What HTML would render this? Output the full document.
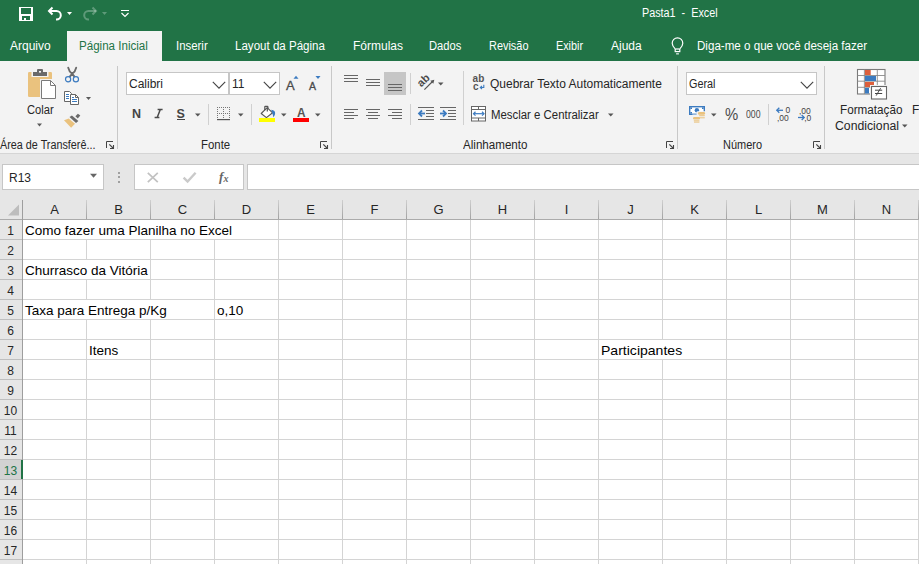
<!DOCTYPE html>
<html><head><meta charset="utf-8"><style>
html,body{margin:0;padding:0;width:919px;height:564px;overflow:hidden;background:#fff;}
body{position:relative;font-family:"Liberation Sans",sans-serif;}
body>div{position:absolute;}
.t{white-space:pre;line-height:1;}
.ch{font-size:13px;color:#262626;text-align:center;}
.rh{left:0;width:21px;font-size:12px;color:#262626;text-align:center;}
</style></head><body>
<div style="left:0px;top:0px;width:919px;height:61px;background:#217346;"></div>
<div style="left:67px;top:31px;width:95px;height:30px;background:#F3F3F3;"></div>
<div style="left:0px;top:61px;width:919px;height:92px;background:#F3F3F3;"></div>
<div style="left:0px;top:153px;width:919px;height:1px;background:#D5D5D5;"></div>
<div style="left:0px;top:154px;width:919px;height:46px;background:#E6E6E6;"></div>
<div class="t" style="left:642px;top:7px;font-size:12px;color:#FFFFFF;transform:scaleX(0.9000);transform-origin:0 0;">Pasta1&nbsp;&nbsp;-&nbsp;&nbsp;Excel</div>
<div class="t" style="left:10px;top:40px;font-size:12px;color:#FFFFFF;transform:scaleX(1.0000);transform-origin:0 0;">Arquivo</div>
<div class="t" style="left:79px;top:40px;font-size:12px;color:#217346;transform:scaleX(0.9650);transform-origin:0 0;">Página Inicial</div>
<div class="t" style="left:176px;top:40px;font-size:12px;color:#FFFFFF;transform:scaleX(0.9500);transform-origin:0 0;">Inserir</div>
<div class="t" style="left:235px;top:40px;font-size:12px;color:#FFFFFF;transform:scaleX(0.9630);transform-origin:0 0;">Layout da Página</div>
<div class="t" style="left:353px;top:40px;font-size:12px;color:#FFFFFF;transform:scaleX(1.0000);transform-origin:0 0;">Fórmulas</div>
<div class="t" style="left:429px;top:40px;font-size:12px;color:#FFFFFF;transform:scaleX(0.9300);transform-origin:0 0;">Dados</div>
<div class="t" style="left:489px;top:40px;font-size:12px;color:#FFFFFF;transform:scaleX(0.9100);transform-origin:0 0;">Revisão</div>
<div class="t" style="left:556px;top:40px;font-size:12px;color:#FFFFFF;transform:scaleX(0.9000);transform-origin:0 0;">Exibir</div>
<div class="t" style="left:611px;top:40px;font-size:12px;color:#FFFFFF;transform:scaleX(1.0000);transform-origin:0 0;">Ajuda</div>
<div class="t" style="left:697px;top:40px;font-size:12px;color:#FFFFFF;transform:scaleX(0.9660);transform-origin:0 0;">Diga-me o que você deseja fazer</div>
<div style="left:126px;top:72px;width:103px;height:23px;background:#FFFFFF;box-sizing:border-box;border:1px solid #C6C6C6;"></div>
<div style="left:229px;top:72px;width:51px;height:23px;background:#FFFFFF;box-sizing:border-box;border:1px solid #C6C6C6;"></div>
<div style="left:686px;top:72px;width:131px;height:23px;background:#FFFFFF;box-sizing:border-box;border:1px solid #C6C6C6;"></div>
<svg style="position:absolute;left:664px;top:34px;" width="30" height="24" viewBox="0 0 30 24"><path d="M11 14.6 Q8.2 11.6 8.2 9.2 A5.3 5.3 0 1 1 18.8 9.2 Q18.8 11.6 16 14.6" fill="none" stroke="#FFF" stroke-width="1.2"/><rect x="11.2" y="15" width="4.6" height="2.6" fill="none" stroke="#FFF" stroke-width="1.2"/><rect x="12.1" y="19.3" width="2.8" height="1.1" fill="#FFF"/></svg>
<svg style="position:absolute;left:19px;top:7px;" width="14" height="14" viewBox="0 0 14 14"><rect x="0" y="0" width="14" height="14" fill="#FFFFFF"/><rect x="2" y="1" width="10" height="6" fill="#217346"/><rect x="3" y="9" width="8" height="4" fill="#217346"/><rect x="5" y="11" width="2" height="2" fill="#FFFFFF"/></svg>
<svg style="position:absolute;left:40px;top:0px;" width="40" height="28" viewBox="0 0 40 28"><path d="M9 11 H16.5 A4.3 4.3 0 0 1 16.5 19.6 H16" fill="none" stroke="#FFFFFF" stroke-width="2"/><path d="M12.5 7.5 L9 11 L12.5 14.5" fill="none" stroke="#FFFFFF" stroke-width="2"/><path d="M27 12 H32 L29.5 15 Z" fill="#FFFFFF"/></svg>
<svg style="position:absolute;left:75px;top:0px;" width="40" height="28" viewBox="0 0 40 28"><path d="M21 11 H13.5 A4.3 4.3 0 0 0 13.5 19.6 H14" fill="none" stroke="rgba(255,255,255,0.28)" stroke-width="2"/><path d="M17.5 7.5 L21 11 L17.5 14.5" fill="none" stroke="rgba(255,255,255,0.28)" stroke-width="2"/><path d="M27 12 H32 L29.5 15 Z" fill="rgba(255,255,255,0.28)"/></svg>
<svg style="position:absolute;left:118px;top:6px;" width="14" height="14" viewBox="0 0 14 14"><path d="M3 4.5 H11" stroke="#FFFFFF" stroke-width="1"/><path d="M3.5 7 L7 10.5 L10.5 7" fill="none" stroke="#FFFFFF" stroke-width="1.2"/></svg>
<svg style="position:absolute;left:27px;top:68px;" width="31" height="32" viewBox="0 0 31 32"><rect x="1" y="4" width="24" height="25" rx="1.2" fill="#EAC27E"/><rect x="4.5" y="3" width="17" height="6" fill="#F3F3F3"/><rect x="6" y="4" width="14" height="4" fill="#6A6A6A"/><rect x="10" y="1" width="6" height="4" rx="1" fill="#6A6A6A"/><rect x="12" y="3" width="2" height="1.6" fill="#F3F3F3"/><rect x="13" y="11" width="18" height="21" fill="#F3F3F3"/><path d="M14.5 12.5 H23.5 L28.5 17.5 V30.5 H14.5 Z" fill="#FFFFFF" stroke="#7A7A7A" stroke-width="1"/><path d="M23.5 12.5 V17.5 H28.5" fill="none" stroke="#7A7A7A" stroke-width="1"/></svg>
<svg style="position:absolute;left:36px;top:123px;" width="8" height="5" viewBox="0 0 8 5"><path d="M1 0.5 H6 L3.5 3.5 Z" fill="#5A5A5A"/></svg>
<svg style="position:absolute;left:62px;top:64px;" width="18" height="20" viewBox="0 0 18 20"><path d="M6.2 3.6 Q7 7.5 10.2 9.8 L12.6 12.8 M14.2 3.6 Q13.4 7.5 10.2 9.8 L7.6 12.8" fill="none" stroke="#6A6A6A" stroke-width="1.9" stroke-linecap="round"/><circle cx="6.1" cy="15.3" r="2.6" fill="#F3F3F3" stroke="#3C7BC0" stroke-width="1.2"/><circle cx="13.9" cy="15.3" r="2.6" fill="#F3F3F3" stroke="#3C7BC0" stroke-width="1.2"/></svg>
<svg style="position:absolute;left:63px;top:90px;" width="18" height="16" viewBox="0 0 18 16"><path d="M1.5 1.5 H6.5 L8.5 3.5 V11.5 H1.5 Z" fill="#FFFFFF" stroke="#666" stroke-width="1"/><path d="M3 4.5 H6 M3 6.5 H6 M3 8.5 H6" stroke="#3C7BC0" stroke-width="1"/><path d="M7.5 4.5 H12.5 L15.5 7.5 V14.5 H7.5 Z" fill="#FFFFFF" stroke="#666" stroke-width="1"/><path d="M12.5 4.5 V7.5 H15.5" fill="none" stroke="#666" stroke-width="1"/><path d="M9 7.5 H11 M9 9.5 H14 M9 11.5 H14" stroke="#3C7BC0" stroke-width="1"/></svg>
<svg style="position:absolute;left:85px;top:96px;" width="8" height="5" viewBox="0 0 8 5"><path d="M1 1 H6 L3.5 4 Z" fill="#5A5A5A"/></svg>
<svg style="position:absolute;left:60px;top:108px;" width="26" height="24" viewBox="0 0 26 24"><path d="M4 12.3 L8.7 10.6 L15 15.8 L11.1 19.8 Z" fill="#EAC27E"/><path d="M9.5 9.1 L11.9 7.6 L18.4 12.9 L16 15 Z" fill="#6A6A6A"/><path d="M15.4 8.2 L17.9 5.7 L20.3 7.5 L17.8 10.4 Z" fill="#6A6A6A"/></svg>
<svg style="position:absolute;left:105px;top:140px;" width="10" height="10" viewBox="0 0 10 10"><path d="M1.5 8 V1.5 H8" fill="none" stroke="#444" stroke-width="1"/><path d="M4.3 4.3 L8 8" stroke="#444" stroke-width="1.1"/><path d="M8.5 5 V8.5 H5" fill="none" stroke="#444" stroke-width="1.1"/></svg>
<svg style="position:absolute;left:319px;top:140px;" width="10" height="10" viewBox="0 0 10 10"><path d="M1.5 8 V1.5 H8" fill="none" stroke="#444" stroke-width="1"/><path d="M4.3 4.3 L8 8" stroke="#444" stroke-width="1.1"/><path d="M8.5 5 V8.5 H5" fill="none" stroke="#444" stroke-width="1.1"/></svg>
<svg style="position:absolute;left:665px;top:140px;" width="10" height="10" viewBox="0 0 10 10"><path d="M1.5 8 V1.5 H8" fill="none" stroke="#444" stroke-width="1"/><path d="M4.3 4.3 L8 8" stroke="#444" stroke-width="1.1"/><path d="M8.5 5 V8.5 H5" fill="none" stroke="#444" stroke-width="1.1"/></svg>
<svg style="position:absolute;left:812px;top:140px;" width="10" height="10" viewBox="0 0 10 10"><path d="M1.5 8 V1.5 H8" fill="none" stroke="#444" stroke-width="1"/><path d="M4.3 4.3 L8 8" stroke="#444" stroke-width="1.1"/><path d="M8.5 5 V8.5 H5" fill="none" stroke="#444" stroke-width="1.1"/></svg>
<svg style="position:absolute;left:211.5px;top:80.5px;" width="14" height="8" viewBox="0 0 14 8"><path d="M0.8 0.8 L7.0 7.2 L13.2 0.8" fill="none" stroke="#444444" stroke-width="1.1"/></svg>
<svg style="position:absolute;left:262.5px;top:80.5px;" width="14" height="8" viewBox="0 0 14 8"><path d="M0.8 0.8 L7.0 7.2 L13.2 0.8" fill="none" stroke="#444444" stroke-width="1.1"/></svg>
<div class="t" style="left:286px;top:79px;font-size:13px;color:#4A4A4A;-webkit-text-stroke:0.3px #4A4A4A;">A</div>
<svg style="position:absolute;left:293px;top:75px;" width="7" height="5" viewBox="0 0 7 5"><path d="M0.5 3.8 L3 0.8 L5.5 3.8 Z" fill="#3C7BC0"/></svg>
<div class="t" style="left:309px;top:81px;font-size:10.5px;color:#4A4A4A;-webkit-text-stroke:0.3px #4A4A4A;">A</div>
<svg style="position:absolute;left:315px;top:75px;" width="7" height="5" viewBox="0 0 7 5"><path d="M0.5 1 L3 4 L5.5 1 Z" fill="#3C7BC0"/></svg>
<div class="t" style="left:132px;top:108px;font-size:12.5px;font-weight:bold;color:#444;">N</div>
<svg style="position:absolute;left:153px;top:108px;" width="11" height="11" viewBox="0 0 11 11"><path d="M4.6 1.6 H9.6 M1.6 9.6 H6.4 M7.3 1.6 L4.2 9.6" fill="none" stroke="#4A4A4A" stroke-width="1.5"/></svg>
<div class="t" style="left:176.5px;top:108px;font-size:12.5px;font-weight:bold;color:#444;">S</div>
<div style="left:177px;top:119px;width:8px;height:1px;background:#444;"></div>
<svg style="position:absolute;left:194.5px;top:113px;" width="6" height="4" viewBox="0 0 6 4"><path d="M0 0.5 H5.5 L2.75 3.5 Z" fill="#555"/></svg>
<div style="left:208px;top:104px;width:1px;height:21px;background:#D0D0D0;"></div>
<svg style="position:absolute;left:217px;top:107px;" width="14" height="14" viewBox="0 0 14 14"><rect x="0" y="0" width="1" height="1" fill="#777"/><rect x="6" y="0" width="1" height="1" fill="#777"/><rect x="12" y="0" width="1" height="1" fill="#777"/><rect x="0" y="2" width="1" height="1" fill="#777"/><rect x="6" y="2" width="1" height="1" fill="#777"/><rect x="12" y="2" width="1" height="1" fill="#777"/><rect x="0" y="4" width="1" height="1" fill="#777"/><rect x="6" y="4" width="1" height="1" fill="#777"/><rect x="12" y="4" width="1" height="1" fill="#777"/><rect x="0" y="6" width="1" height="1" fill="#777"/><rect x="6" y="6" width="1" height="1" fill="#777"/><rect x="12" y="6" width="1" height="1" fill="#777"/><rect x="0" y="8" width="1" height="1" fill="#777"/><rect x="6" y="8" width="1" height="1" fill="#777"/><rect x="12" y="8" width="1" height="1" fill="#777"/><rect x="0" y="10" width="1" height="1" fill="#777"/><rect x="6" y="10" width="1" height="1" fill="#777"/><rect x="12" y="10" width="1" height="1" fill="#777"/><rect x="2" y="0" width="1" height="1" fill="#777"/><rect x="4" y="0" width="1" height="1" fill="#777"/><rect x="6" y="0" width="1" height="1" fill="#777"/><rect x="8" y="0" width="1" height="1" fill="#777"/><rect x="10" y="0" width="1" height="1" fill="#777"/><rect x="2" y="6" width="1" height="1" fill="#777"/><rect x="4" y="6" width="1" height="1" fill="#777"/><rect x="6" y="6" width="1" height="1" fill="#777"/><rect x="8" y="6" width="1" height="1" fill="#777"/><rect x="10" y="6" width="1" height="1" fill="#777"/><rect x="0" y="12" width="13" height="1.2" fill="#555"/></svg>
<svg style="position:absolute;left:237.5px;top:113px;" width="6" height="4" viewBox="0 0 6 4"><path d="M0 0.5 H5.5 L2.75 3.5 Z" fill="#555"/></svg>
<div style="left:251px;top:104px;width:1px;height:21px;background:#D0D0D0;"></div>
<svg style="position:absolute;left:258px;top:104px;" width="20" height="20" viewBox="0 0 20 20"><path d="M3.2 9.5 L9.2 3.6 L14.6 8.8 L8.4 13.6 Z" fill="#FFF" stroke="#555" stroke-width="1.1" stroke-linejoin="round"/><path d="M6.8 6.2 V2.8 Q6.8 2.3 7.3 2.3 H9.3 Q9.9 2.3 9.9 2.9 V4.4 M9.3 4 V7.6" fill="none" stroke="#555" stroke-width="1.2"/><path d="M13.2 5.8 Q17.6 6.4 17.1 10 Q16.7 12 15.2 13.3 Q15.1 11 14.3 9.2 Z" fill="#3C7BC0"/><rect x="1" y="14" width="16" height="4" fill="#FFFF00"/></svg>
<svg style="position:absolute;left:280.5px;top:113px;" width="6" height="4" viewBox="0 0 6 4"><path d="M0 0.5 H5.5 L2.75 3.5 Z" fill="#555"/></svg>
<div class="t" style="left:297px;top:106px;font-size:13.5px;font-weight:bold;color:#555;transform:scaleX(0.88);transform-origin:0 0;">A</div>
<div style="left:293px;top:118px;width:16px;height:4px;background:#FF0000;"></div>
<svg style="position:absolute;left:314.5px;top:113px;" width="6" height="4" viewBox="0 0 6 4"><path d="M0 0.5 H5.5 L2.75 3.5 Z" fill="#555"/></svg>
<div style="left:344px;top:75px;width:14px;height:1px;background:#666666;"></div>
<div style="left:344px;top:78px;width:14px;height:1px;background:#666666;"></div>
<div style="left:344px;top:81px;width:14px;height:1px;background:#666666;"></div>
<div style="left:366px;top:79px;width:14px;height:1px;background:#666666;"></div>
<div style="left:366px;top:82px;width:14px;height:1px;background:#666666;"></div>
<div style="left:366px;top:85px;width:14px;height:1px;background:#666666;"></div>
<div style="left:384px;top:72px;width:22px;height:23px;background:#C6C6C6;"></div>
<div style="left:388px;top:84px;width:14px;height:1px;background:#666666;"></div>
<div style="left:388px;top:87px;width:14px;height:1px;background:#666666;"></div>
<div style="left:388px;top:90px;width:14px;height:1px;background:#666666;"></div>
<div style="left:410px;top:73px;width:1px;height:21px;background:#D0D0D0;"></div>
<svg style="position:absolute;left:416px;top:73px;" width="22" height="20" viewBox="0 0 22 20"><text x="0" y="0" transform="translate(5.3,14.6) rotate(-45)" font-family="Liberation Sans" font-size="11" font-weight="bold" fill="#4A4A4A">ab</text><path d="M8.4 16.6 L16.5 8.5" stroke="#555" stroke-width="1.2"/><path d="M18.3 6.7 L14.3 7.7 L17.3 10.7 Z" fill="#555"/></svg>
<svg style="position:absolute;left:437.5px;top:82px;" width="6" height="4" viewBox="0 0 6 4"><path d="M0 0.5 H5.5 L2.75 3.5 Z" fill="#555"/></svg>
<div style="left:344px;top:109px;width:14px;height:1px;background:#666666;"></div>
<div style="left:366px;top:109px;width:14px;height:1px;background:#666666;"></div>
<div style="left:388px;top:109px;width:14px;height:1px;background:#666666;"></div>
<div style="left:344px;top:112px;width:10px;height:1px;background:#666666;"></div>
<div style="left:368px;top:112px;width:10px;height:1px;background:#666666;"></div>
<div style="left:392px;top:112px;width:10px;height:1px;background:#666666;"></div>
<div style="left:344px;top:115px;width:14px;height:1px;background:#666666;"></div>
<div style="left:366px;top:115px;width:14px;height:1px;background:#666666;"></div>
<div style="left:388px;top:115px;width:14px;height:1px;background:#666666;"></div>
<div style="left:344px;top:118px;width:10px;height:1px;background:#666666;"></div>
<div style="left:368px;top:118px;width:10px;height:1px;background:#666666;"></div>
<div style="left:392px;top:118px;width:10px;height:1px;background:#666666;"></div>
<div style="left:410px;top:104px;width:1px;height:21px;background:#D0D0D0;"></div>
<div style="left:418px;top:107px;width:16px;height:1px;background:#666666;"></div>
<div style="left:418px;top:119px;width:16px;height:1px;background:#666666;"></div>
<div style="left:426px;top:110px;width:8px;height:1px;background:#666666;"></div>
<div style="left:426px;top:113px;width:8px;height:1px;background:#666666;"></div>
<div style="left:426px;top:116px;width:8px;height:1px;background:#666666;"></div>
<div style="left:440px;top:107px;width:16px;height:1px;background:#666666;"></div>
<div style="left:440px;top:119px;width:16px;height:1px;background:#666666;"></div>
<div style="left:448px;top:110px;width:8px;height:1px;background:#666666;"></div>
<div style="left:448px;top:113px;width:8px;height:1px;background:#666666;"></div>
<div style="left:448px;top:116px;width:8px;height:1px;background:#666666;"></div>
<svg style="position:absolute;left:417px;top:105px;" width="18" height="16" viewBox="0 0 18 16"><path d="M2.2 8.5 H8" stroke="#3C7BC0" stroke-width="1.8"/><path d="M5 5.5 L2 8.5 L5 11.5" fill="none" stroke="#3C7BC0" stroke-width="1.8"/></svg>
<svg style="position:absolute;left:439px;top:105px;" width="18" height="16" viewBox="0 0 18 16"><path d="M1 8.5 H6.8" stroke="#3C7BC0" stroke-width="1.8"/><path d="M4 5.5 L7 8.5 L4 11.5" fill="none" stroke="#3C7BC0" stroke-width="1.8"/></svg>
<div style="left:463px;top:71px;width:1px;height:54px;background:#D0D0D0;"></div>
<svg style="position:absolute;left:470px;top:74px;" width="18" height="18" viewBox="0 0 18 18"><text x="2.6" y="8.4" font-family="Liberation Sans" font-size="10" font-weight="bold" fill="#555">ab</text><text x="3" y="15.9" font-family="Liberation Sans" font-size="10" font-weight="bold" fill="#555">c</text><path d="M13.8 10.8 V13.5 H10.5" fill="none" stroke="#3C7BC0" stroke-width="1.1"/><path d="M12 12 L10.3 13.5 L12 15" fill="none" stroke="#3C7BC0" stroke-width="1.1"/></svg>
<svg style="position:absolute;left:470px;top:105px;" width="18" height="18" viewBox="0 0 18 18"><rect x="1.5" y="1.5" width="14" height="14.5" fill="#FFF" stroke="#666" stroke-width="1"/><path d="M1.5 4.5 H15.5 M1.5 13 H15.5 M8.5 1.5 V4.5 M8.5 13 V16" stroke="#666" stroke-width="1"/><path d="M3.8 8.7 H13.8" stroke="#3C7BC0" stroke-width="1.2"/><path d="M5.5 6.8 L3.5 8.7 L5.5 10.6 M12 6.8 L14 8.7 L12 10.6" fill="none" stroke="#3C7BC0" stroke-width="1.2"/></svg>
<svg style="position:absolute;left:608px;top:113px;" width="6" height="4" viewBox="0 0 6 4"><path d="M0 0.5 H5.5 L2.75 3.5 Z" fill="#555"/></svg>
<svg style="position:absolute;left:799.5px;top:80.5px;" width="14" height="8" viewBox="0 0 14 8"><path d="M0.8 0.8 L7.0 7.2 L13.2 0.8" fill="none" stroke="#444444" stroke-width="1.1"/></svg>
<svg style="position:absolute;left:687px;top:104px;" width="20" height="20" viewBox="0 0 20 20"><rect x="2" y="2" width="16" height="9" fill="#3C7BC0"/><rect x="3.4" y="3.4" width="13.2" height="6.2" fill="#FFF"/><rect x="3.4" y="3.4" width="1.6" height="1.6" fill="#3C7BC0"/><rect x="15" y="3.4" width="1.6" height="1.6" fill="#3C7BC0"/><rect x="3.4" y="8" width="1.6" height="1.6" fill="#3C7BC0"/><rect x="15" y="8" width="1.6" height="1.6" fill="#3C7BC0"/><circle cx="9.9" cy="6.2" r="2.2" fill="#3C7BC0"/><rect x="9.6" y="7.2" width="9.5" height="4.5" rx="1" fill="#F3F3F3"/><rect x="5" y="10.5" width="9" height="8" rx="1" fill="#F3F3F3"/><rect x="10.9" y="8" width="7.2" height="2.8" rx="1.4" fill="#EAC27E"/><rect x="12.2" y="11.2" width="5.6" height="1" fill="#EAC27E"/><rect x="12.2" y="13.3" width="5.6" height="1" fill="#EAC27E"/><rect x="6" y="13" width="7" height="2.6" rx="1.3" fill="#EAC27E"/><rect x="6.8" y="16.3" width="5.6" height="1" fill="#EAC27E"/><rect x="7" y="17.6" width="5.4" height="1" fill="#EAC27E"/></svg>
<svg style="position:absolute;left:710.5px;top:113px;" width="6" height="4" viewBox="0 0 6 4"><path d="M0 0.5 H5.5 L2.75 3.5 Z" fill="#555"/></svg>
<div class="t" style="left:724.5px;top:107px;font-size:16px;color:#4A4A4A;transform:scaleX(0.93);transform-origin:0 0;">%</div>
<div class="t" style="left:745.5px;top:108.5px;font-size:10.5px;color:#4A4A4A;transform:scaleX(0.83);transform-origin:0 0;">000</div>
<div style="left:768px;top:104px;width:1px;height:21px;background:#D0D0D0;"></div>
<svg style="position:absolute;left:775px;top:105px;" width="18" height="18" viewBox="0 0 18 18"><path d="M1.8 5.3 H8" stroke="#3C7BC0" stroke-width="1.3"/><path d="M4.3 2.8 L1.8 5.3 L4.3 7.8" fill="none" stroke="#3C7BC0" stroke-width="1.3"/><text x="10.5" y="7.5" font-family="Liberation Sans" font-size="8.5" fill="#444">0</text><text x="2" y="15.5" font-family="Liberation Sans" font-size="8.5" fill="#444">,00</text></svg>
<svg style="position:absolute;left:797px;top:105px;" width="18" height="18" viewBox="0 0 18 18"><text x="2" y="8.8" font-family="Liberation Sans" font-size="8.5" fill="#444">,00</text><text x="7.2" y="15.5" font-family="Liberation Sans" font-size="8.5" fill="#444">,0</text><path d="M1 12.5 H7.2" stroke="#3C7BC0" stroke-width="1.3"/><path d="M4.7 10 L7.2 12.5 L4.7 15" fill="none" stroke="#3C7BC0" stroke-width="1.3"/></svg>
<svg style="position:absolute;left:855px;top:67px;" width="34" height="34" viewBox="0 0 34 34"><rect x="2.5" y="2.5" width="27.5" height="24.5" fill="#FFF" stroke="#7A7A7A" stroke-width="1.1"/><path d="M2.5 8.5 H30 M2.5 14.2 H30 M2.5 20.3 H30 M9.4 2.5 V27 M22.3 2.5 V27" stroke="#8A8A8A" stroke-width="0.9"/><rect x="10" y="3" width="5.7" height="5" fill="#DD5F3C"/><rect x="10" y="9" width="11" height="5" fill="#3C7BC0"/><rect x="10" y="15" width="9" height="5" fill="#DD5F3C"/><rect x="10" y="21" width="4" height="5.5" fill="#3C7BC0"/><rect x="15" y="18" width="18.5" height="15" fill="#F3F3F3"/><rect x="16.5" y="19.5" width="15" height="12.5" fill="#FFF" stroke="#666" stroke-width="1.1"/><path d="M20 23.2 H27.2 M20 26.5 H27.2" stroke="#444" stroke-width="1"/><path d="M25.6 21.2 L21.2 28.6" stroke="#444" stroke-width="1"/></svg>
<svg style="position:absolute;left:902px;top:124px;" width="6" height="4" viewBox="0 0 6 4"><path d="M0 0.5 H5.5 L2.75 3.5 Z" fill="#555"/></svg>
<div class="t" style="left:27px;top:104px;font-size:12px;color:#262626;transform:scaleX(0.9300);transform-origin:0 0;">Colar</div>
<div class="t" style="left:0px;top:139px;font-size:12px;color:#262626;transform:scaleX(0.9000);transform-origin:0 0;">Área de Transferê...</div>
<div class="t" style="left:201px;top:139px;font-size:12px;color:#262626;transform:scaleX(0.9500);transform-origin:0 0;">Fonte</div>
<div class="t" style="left:463px;top:139px;font-size:12px;color:#262626;transform:scaleX(0.9660);transform-origin:0 0;">Alinhamento</div>
<div class="t" style="left:723px;top:139px;font-size:12px;color:#262626;transform:scaleX(0.9140);transform-origin:0 0;">Número</div>
<div class="t" style="left:840px;top:104px;font-size:12px;color:#262626;transform:scaleX(0.9750);transform-origin:0 0;">Formatação</div>
<div class="t" style="left:835px;top:120px;font-size:12px;color:#262626;transform:scaleX(1.0200);transform-origin:0 0;">Condicional</div>
<div class="t" style="left:912px;top:104px;font-size:12px;color:#262626;">F</div>
<div class="t" style="left:490px;top:78px;font-size:12px;color:#262626;">Quebrar Texto Automaticamente</div>
<div class="t" style="left:491px;top:109px;font-size:12px;color:#262626;transform:scaleX(0.9500);transform-origin:0 0;">Mesclar e Centralizar</div>
<div class="t" style="left:129px;top:78px;font-size:12px;color:#262626;">Calibri</div>
<div class="t" style="left:232px;top:78px;font-size:12px;color:#262626;">11</div>
<div class="t" style="left:689px;top:78px;font-size:12px;color:#262626;transform:scaleX(0.9000);transform-origin:0 0;">Geral</div>
<div style="left:117px;top:66px;width:1px;height:83px;background:#C8C8C8;"></div>
<div style="left:331px;top:66px;width:1px;height:83px;background:#C8C8C8;"></div>
<div style="left:677px;top:66px;width:1px;height:83px;background:#C8C8C8;"></div>
<div style="left:824px;top:66px;width:1px;height:83px;background:#C8C8C8;"></div>
<div style="left:2px;top:164px;width:102px;height:26px;background:#FFFFFF;box-sizing:border-box;border:1px solid #C6C6C6;"></div>
<div class="t" style="left:9px;top:172px;font-size:12px;color:#262626;">R13</div>
<div style="left:134px;top:164px;width:110px;height:26px;background:#FFFFFF;box-sizing:border-box;border:1px solid #C6C6C6;"></div>
<div style="left:247px;top:164px;width:680px;height:26px;background:#FFFFFF;box-sizing:border-box;border:1px solid #C6C6C6;"></div>
<svg style="position:absolute;left:89px;top:173px;" width="10" height="6" viewBox="0 0 10 6"><path d="M1 0.8 H8 L4.5 4.8 Z" fill="#666"/></svg>
<div style="left:118px;top:172px;width:2px;height:2px;background:#A0A0A0;"></div>
<div style="left:118px;top:176.3px;width:2px;height:2px;background:#A0A0A0;"></div>
<div style="left:118px;top:180.6px;width:2px;height:2px;background:#A0A0A0;"></div>
<svg style="position:absolute;left:145px;top:170px;" width="16" height="15" viewBox="0 0 16 15"><path d="M2.8 2.8 L12.8 12.2 M12.8 2.8 L2.8 12.2" stroke="#C2C2C2" stroke-width="1.7"/></svg>
<svg style="position:absolute;left:181px;top:170px;" width="17" height="15" viewBox="0 0 17 15"><path d="M2.6 7.6 L6.6 11.6 L14.6 2.8" fill="none" stroke="#CACACA" stroke-width="2.4"/></svg>
<div class="t" style="left:219px;top:170px;font-size:13px;font-style:italic;font-weight:bold;font-family:'Liberation Serif';color:#666;">f</div>
<div class="t" style="left:223.5px;top:173.5px;font-size:10px;font-style:italic;font-weight:bold;font-family:'Liberation Serif';color:#666;">x</div>
<div style="left:0px;top:200px;width:919px;height:20px;background:#E6E6E6;"></div>
<div style="left:0px;top:220px;width:22px;height:344px;background:#E6E6E6;"></div>
<div style="left:23px;top:220px;width:896px;height:344px;background:#FFFFFF;"></div>
<div style="left:0px;top:219px;width:919px;height:1px;background:#ABABAB;"></div>
<svg style="position:absolute;left:0px;top:200px;" width="22" height="19" viewBox="0 0 22 19"><path d="M8 15.5 L19 4.5 V15.5 Z" fill="#BDBDBD"/></svg>
<div style="left:22px;top:200px;width:1px;height:364px;background:#9E9E9E;"></div>
<div style="left:86px;top:200px;width:1px;height:19px;background:linear-gradient(#CFCFCF,#A2A2A2);"></div>
<div style="left:86px;top:220px;width:1px;height:344px;background:#D4D4D4;"></div>
<div class="t ch" style="left:23px;top:203px;width:63px;">A</div>
<div style="left:150px;top:200px;width:1px;height:19px;background:linear-gradient(#CFCFCF,#A2A2A2);"></div>
<div style="left:150px;top:220px;width:1px;height:344px;background:#D4D4D4;"></div>
<div class="t ch" style="left:87px;top:203px;width:63px;">B</div>
<div style="left:214px;top:200px;width:1px;height:19px;background:linear-gradient(#CFCFCF,#A2A2A2);"></div>
<div style="left:214px;top:220px;width:1px;height:344px;background:#D4D4D4;"></div>
<div class="t ch" style="left:151px;top:203px;width:63px;">C</div>
<div style="left:278px;top:200px;width:1px;height:19px;background:linear-gradient(#CFCFCF,#A2A2A2);"></div>
<div style="left:278px;top:220px;width:1px;height:344px;background:#D4D4D4;"></div>
<div class="t ch" style="left:215px;top:203px;width:63px;">D</div>
<div style="left:342px;top:200px;width:1px;height:19px;background:linear-gradient(#CFCFCF,#A2A2A2);"></div>
<div style="left:342px;top:220px;width:1px;height:344px;background:#D4D4D4;"></div>
<div class="t ch" style="left:279px;top:203px;width:63px;">E</div>
<div style="left:406px;top:200px;width:1px;height:19px;background:linear-gradient(#CFCFCF,#A2A2A2);"></div>
<div style="left:406px;top:220px;width:1px;height:344px;background:#D4D4D4;"></div>
<div class="t ch" style="left:343px;top:203px;width:63px;">F</div>
<div style="left:470px;top:200px;width:1px;height:19px;background:linear-gradient(#CFCFCF,#A2A2A2);"></div>
<div style="left:470px;top:220px;width:1px;height:344px;background:#D4D4D4;"></div>
<div class="t ch" style="left:407px;top:203px;width:63px;">G</div>
<div style="left:534px;top:200px;width:1px;height:19px;background:linear-gradient(#CFCFCF,#A2A2A2);"></div>
<div style="left:534px;top:220px;width:1px;height:344px;background:#D4D4D4;"></div>
<div class="t ch" style="left:471px;top:203px;width:63px;">H</div>
<div style="left:598px;top:200px;width:1px;height:19px;background:linear-gradient(#CFCFCF,#A2A2A2);"></div>
<div style="left:598px;top:220px;width:1px;height:344px;background:#D4D4D4;"></div>
<div class="t ch" style="left:535px;top:203px;width:63px;">I</div>
<div style="left:662px;top:200px;width:1px;height:19px;background:linear-gradient(#CFCFCF,#A2A2A2);"></div>
<div style="left:662px;top:220px;width:1px;height:344px;background:#D4D4D4;"></div>
<div class="t ch" style="left:599px;top:203px;width:63px;">J</div>
<div style="left:726px;top:200px;width:1px;height:19px;background:linear-gradient(#CFCFCF,#A2A2A2);"></div>
<div style="left:726px;top:220px;width:1px;height:344px;background:#D4D4D4;"></div>
<div class="t ch" style="left:663px;top:203px;width:63px;">K</div>
<div style="left:790px;top:200px;width:1px;height:19px;background:linear-gradient(#CFCFCF,#A2A2A2);"></div>
<div style="left:790px;top:220px;width:1px;height:344px;background:#D4D4D4;"></div>
<div class="t ch" style="left:727px;top:203px;width:63px;">L</div>
<div style="left:854px;top:200px;width:1px;height:19px;background:linear-gradient(#CFCFCF,#A2A2A2);"></div>
<div style="left:854px;top:220px;width:1px;height:344px;background:#D4D4D4;"></div>
<div class="t ch" style="left:791px;top:203px;width:63px;">M</div>
<div style="left:918px;top:200px;width:1px;height:19px;background:linear-gradient(#CFCFCF,#A2A2A2);"></div>
<div style="left:918px;top:220px;width:1px;height:344px;background:#D4D4D4;"></div>
<div class="t ch" style="left:855px;top:203px;width:63px;">N</div>
<div style="left:23px;top:239px;width:896px;height:1px;background:#D4D4D4;"></div>
<div style="left:0px;top:239px;width:22px;height:1px;background:#BFBFBF;"></div>
<div class="t rh" style="top:225px;">1</div>
<div style="left:23px;top:259px;width:896px;height:1px;background:#D4D4D4;"></div>
<div style="left:0px;top:259px;width:22px;height:1px;background:#BFBFBF;"></div>
<div class="t rh" style="top:245px;">2</div>
<div style="left:23px;top:279px;width:896px;height:1px;background:#D4D4D4;"></div>
<div style="left:0px;top:279px;width:22px;height:1px;background:#BFBFBF;"></div>
<div class="t rh" style="top:265px;">3</div>
<div style="left:23px;top:299px;width:896px;height:1px;background:#D4D4D4;"></div>
<div style="left:0px;top:299px;width:22px;height:1px;background:#BFBFBF;"></div>
<div class="t rh" style="top:285px;">4</div>
<div style="left:23px;top:319px;width:896px;height:1px;background:#D4D4D4;"></div>
<div style="left:0px;top:319px;width:22px;height:1px;background:#BFBFBF;"></div>
<div class="t rh" style="top:305px;">5</div>
<div style="left:23px;top:339px;width:896px;height:1px;background:#D4D4D4;"></div>
<div style="left:0px;top:339px;width:22px;height:1px;background:#BFBFBF;"></div>
<div class="t rh" style="top:325px;">6</div>
<div style="left:23px;top:359px;width:896px;height:1px;background:#D4D4D4;"></div>
<div style="left:0px;top:359px;width:22px;height:1px;background:#BFBFBF;"></div>
<div class="t rh" style="top:345px;">7</div>
<div style="left:23px;top:379px;width:896px;height:1px;background:#D4D4D4;"></div>
<div style="left:0px;top:379px;width:22px;height:1px;background:#BFBFBF;"></div>
<div class="t rh" style="top:365px;">8</div>
<div style="left:23px;top:399px;width:896px;height:1px;background:#D4D4D4;"></div>
<div style="left:0px;top:399px;width:22px;height:1px;background:#BFBFBF;"></div>
<div class="t rh" style="top:385px;">9</div>
<div style="left:23px;top:419px;width:896px;height:1px;background:#D4D4D4;"></div>
<div style="left:0px;top:419px;width:22px;height:1px;background:#BFBFBF;"></div>
<div class="t rh" style="top:405px;">10</div>
<div style="left:23px;top:439px;width:896px;height:1px;background:#D4D4D4;"></div>
<div style="left:0px;top:439px;width:22px;height:1px;background:#BFBFBF;"></div>
<div class="t rh" style="top:425px;">11</div>
<div style="left:23px;top:459px;width:896px;height:1px;background:#D4D4D4;"></div>
<div style="left:0px;top:459px;width:22px;height:1px;background:#BFBFBF;"></div>
<div class="t rh" style="top:445px;">12</div>
<div style="left:23px;top:479px;width:896px;height:1px;background:#D4D4D4;"></div>
<div style="left:0px;top:479px;width:22px;height:1px;background:#BFBFBF;"></div>
<div style="left:0px;top:460px;width:22px;height:19px;background:#D2D2D2;"></div>
<div style="left:21px;top:460px;width:2px;height:19px;background:#217346;"></div>
<div class="t rh" style="top:465px;color:#217346;">13</div>
<div style="left:23px;top:499px;width:896px;height:1px;background:#D4D4D4;"></div>
<div style="left:0px;top:499px;width:22px;height:1px;background:#BFBFBF;"></div>
<div class="t rh" style="top:485px;">14</div>
<div style="left:23px;top:519px;width:896px;height:1px;background:#D4D4D4;"></div>
<div style="left:0px;top:519px;width:22px;height:1px;background:#BFBFBF;"></div>
<div class="t rh" style="top:505px;">15</div>
<div style="left:23px;top:539px;width:896px;height:1px;background:#D4D4D4;"></div>
<div style="left:0px;top:539px;width:22px;height:1px;background:#BFBFBF;"></div>
<div class="t rh" style="top:525px;">16</div>
<div style="left:23px;top:559px;width:896px;height:1px;background:#D4D4D4;"></div>
<div style="left:0px;top:559px;width:22px;height:1px;background:#BFBFBF;"></div>
<div class="t rh" style="top:545px;">17</div>
<div style="left:86px;top:220px;width:1px;height:19px;background:#FFFFFF;"></div>
<div style="left:150px;top:220px;width:1px;height:19px;background:#FFFFFF;"></div>
<div style="left:214px;top:220px;width:1px;height:19px;background:#FFFFFF;"></div>
<div style="left:86px;top:260px;width:1px;height:19px;background:#FFFFFF;"></div>
<div style="left:86px;top:300px;width:1px;height:19px;background:#FFFFFF;"></div>
<div style="left:150px;top:300px;width:1px;height:19px;background:#FFFFFF;"></div>
<div style="left:662px;top:340px;width:1px;height:19px;background:#FFFFFF;"></div>
<div class="t" style="left:25px;top:224px;font-size:13.5px;color:#000000;">Como fazer uma Planilha no Excel</div>
<div class="t" style="left:25px;top:264px;font-size:13.5px;color:#000000;">Churrasco da Vitória</div>
<div class="t" style="left:25px;top:304px;font-size:13.5px;color:#000000;">Taxa para Entrega p/Kg</div>
<div class="t" style="left:217px;top:304px;font-size:13.5px;color:#000000;">o,10</div>
<div class="t" style="left:89px;top:344px;font-size:13.5px;color:#000000;">Itens</div>
<div class="t" style="left:601px;top:344px;font-size:13.5px;color:#000000;transform:scaleX(1.0400);transform-origin:0 0;">Participantes</div>
</body></html>
